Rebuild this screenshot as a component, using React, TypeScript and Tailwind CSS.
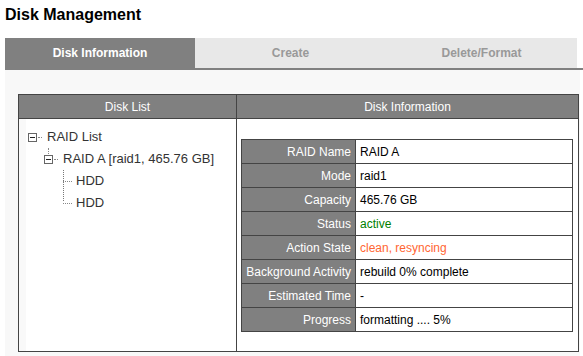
import React from 'react';

const rows: { label: string; value: string; color?: string }[] = [
  { label: 'RAID Name', value: 'RAID A' },
  { label: 'Mode', value: 'raid1' },
  { label: 'Capacity', value: '465.76 GB' },
  { label: 'Status', value: 'active', color: 'text-[#008000]' },
  { label: 'Action State', value: 'clean, resyncing', color: 'text-[#ff6633]' },
  { label: 'Background Activity', value: 'rebuild 0% complete' },
  { label: 'Estimated Time', value: '-' },
  { label: 'Progress', value: 'formatting .... 5%' },
];

const MinusBox = () => (
  <span className="inline-block w-[9px] h-[9px] border border-[#666] bg-white relative shrink-0">
    <span className="absolute left-[1px] right-[1px] top-[3px] h-px bg-[#222]" />
  </span>
);

const TreePanel = () => (
  <div className="flex h-full">
    <div className="w-[7px] bg-[#f9f9f9]" />
    <div className="flex-1 pt-[7px] pl-[2px] text-[13px] text-[#333] relative">
      <div className="flex items-center h-[22px]">
        <MinusBox />
        <span className="w-[4px] ml-[1px] mr-[5px] border-t border-dotted border-[#888]" />
        <span>RAID List</span>
      </div>
      <div className="flex items-center h-[22px] pl-[16px] relative">
        <span className="absolute left-[20px] top-0 h-[6px] border-l border-dotted border-[#888]" />
        <MinusBox />
        <span className="w-[4px] ml-[1px] mr-[5px] border-t border-dotted border-[#888]" />
        <span>RAID A [raid1, 465.76 GB]</span>
      </div>
      <div className="pl-[35px] relative">
        <span className="absolute left-[35px] top-0 h-[31px] border-l border-dotted border-[#777]" />
        <div className="flex items-center h-[22px]">
          <span className="w-[9px] mr-[4px] border-t border-dotted border-[#888]" />
          <span>HDD</span>
        </div>
        <div className="flex items-center h-[22px]">
          <span className="w-[9px] mr-[4px] border-t border-dotted border-[#888]" />
          <span>HDD</span>
        </div>
      </div>
    </div>
  </div>
);

const InfoTable = () => (
  <table className="border-collapse border border-[#444] w-[332px] text-[12px]">
    <tbody>
      {rows.map((r) => (
        <tr key={r.label} className="h-[24px]">
          <td className="w-[114px] bg-[#808080] text-white text-right pr-[4px] border border-[#444] whitespace-nowrap">
            {r.label}
          </td>
          <td className={`bg-white pl-[4px] border border-[#444] ${r.color ?? 'text-black'}`}>
            {r.value}
          </td>
        </tr>
      ))}
    </tbody>
  </table>
);

export default function App() {
  return (
    <div
      className="w-[583px] h-[356px] bg-white overflow-hidden"
      style={{ fontFamily: '"Liberation Sans", Arial, sans-serif' }}
    >
      <div className="h-[38px] pl-[5px] pt-[3px] text-[16px] font-bold text-black">Disk Management</div>

      <div className="ml-[5px] flex border-b-2 border-[#808080] text-[12px] font-bold">
        <div className="w-[190px] h-[30px] bg-[#808080] text-white flex items-center justify-center">
          Disk Information
        </div>
        <div className="w-[191px] h-[30px] bg-[#e8e8e8] text-[#999] flex items-center justify-center">
          Create
        </div>
        <div className="w-[191px] h-[30px] bg-[#e8e8e8] text-[#999] flex items-center justify-center">
          Delete/Format
        </div>
      </div>

      <div className="ml-[5px] w-[575px] h-[286px] bg-[#f8f8f8] pl-[13px] pt-[24px]">
        <div className="w-[561px] h-[258px] border border-[#444] flex flex-col bg-white">
          <div className="flex h-[24px] bg-[#808080] text-white text-[12px] border-b border-[#444]">
            <div className="w-[218px] flex items-center justify-center border-r border-[#444]">Disk List</div>
            <div className="flex-1 flex items-center justify-center">Disk Information</div>
          </div>
          <div className="flex flex-1">
            <div className="w-[218px] border-r border-[#444]">
              <TreePanel />
            </div>
            <div className="flex-1 pt-[20px] pl-[4px]">
              <InfoTable />
            </div>
          </div>
        </div>
      </div>
    </div>
  );
}
